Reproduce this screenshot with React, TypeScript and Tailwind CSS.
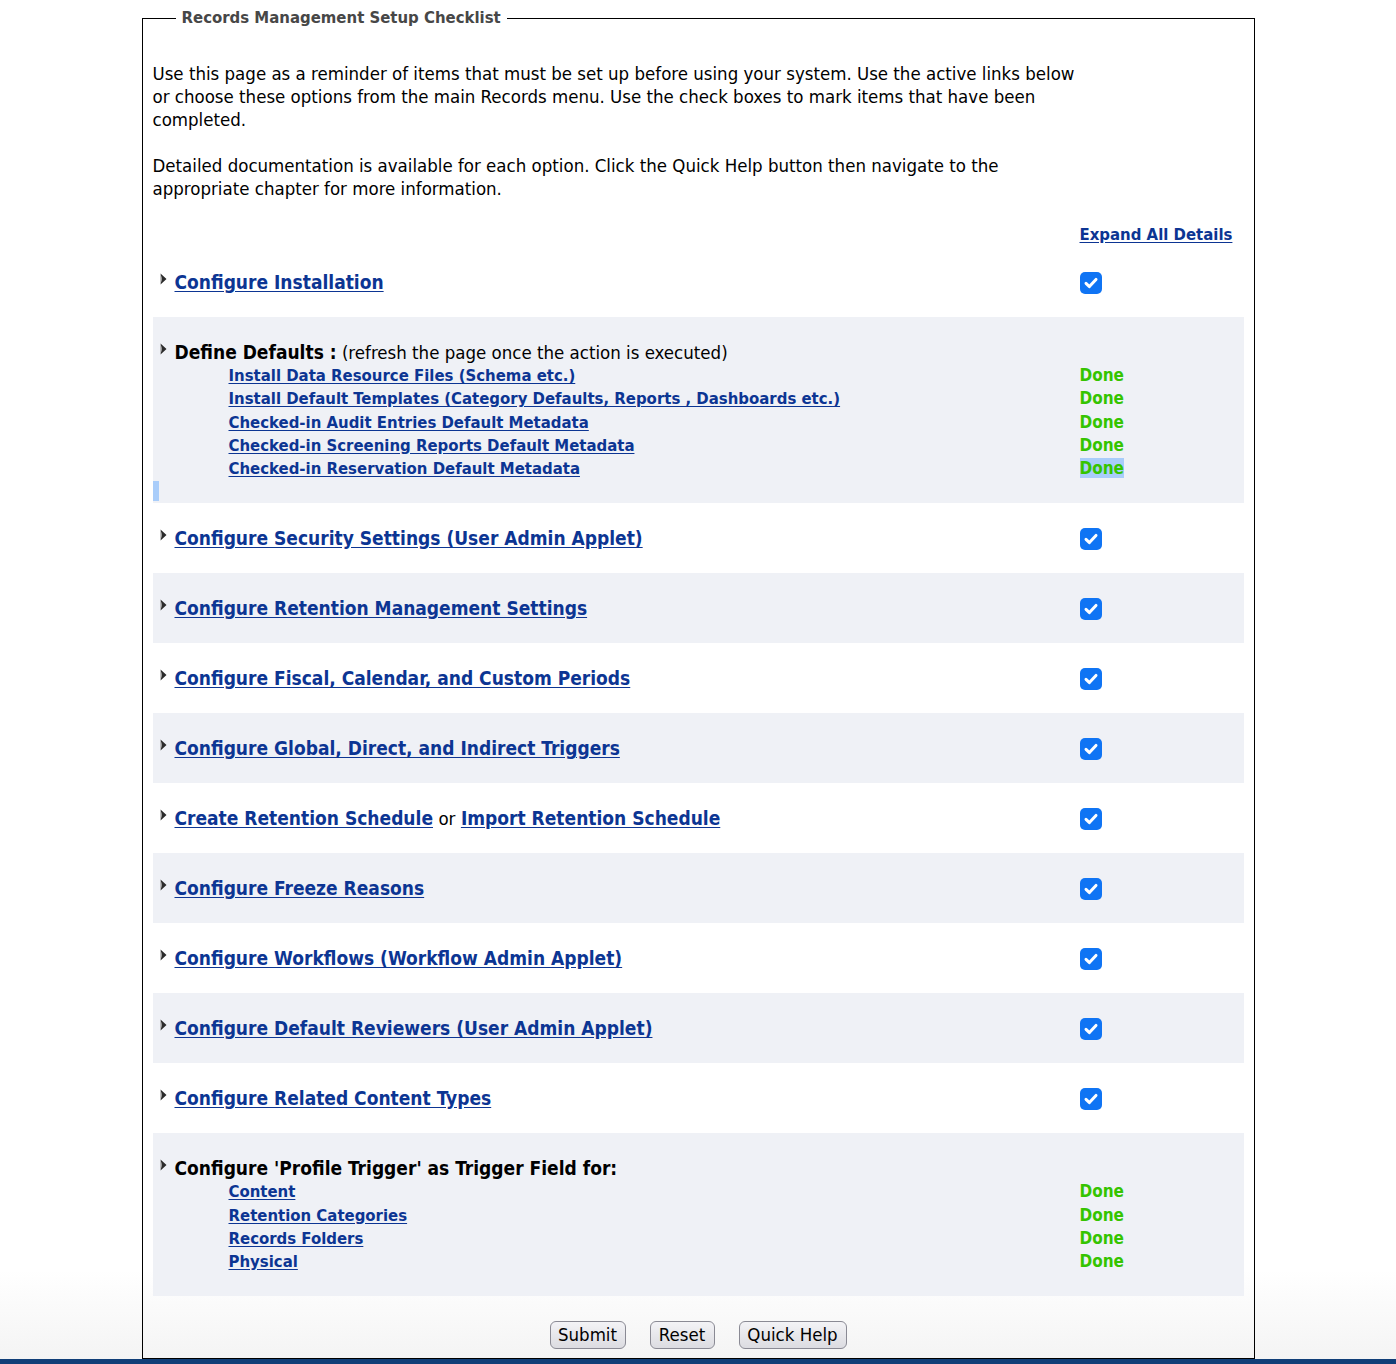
import React from "react";

function Arrow() {
  return (
    <svg width="7" height="12" viewBox="0 0 7 12" className="mt-[2px] ml-[7px] shrink-0">
      <path d="M0.5 0.5 L6.5 6 L0.5 11.5 L1.8 6 Z" fill="#2b2b2b" />
      <path d="M0.5 0.5 L1.8 6 L0.5 11.5 Z" fill="#8a8a8a" />
    </svg>
  );
}

function Check() {
  return (
    <div className="h-[23px] flex items-center">
      <div className="w-[22px] h-[22px] rounded-[5px] bg-[#0f74f4] flex items-center justify-center">
        <svg width="16" height="16" viewBox="0 0 16 16">
          <path d="M3 8.4 L6.4 11.6 L13 4.4" fill="none" stroke="#ffffff" strokeWidth="3" strokeLinecap="round" strokeLinejoin="round" />
        </svg>
      </div>
    </div>
  );
}

function L({ children }: { children: React.ReactNode }) {
  return (
    <a href="#" className="font-bold text-[#0c3593] underline underline-offset-[2px]">
      {children}
    </a>
  );
}

function S({ children }: { children: React.ReactNode }) {
  return (
    <div className="pl-[54px] text-[16.6px] leading-[23.25px]">
      <a href="#" className="font-bold text-[#0c3593] underline underline-offset-[2px]">
        {children}
      </a>
    </div>
  );
}

function Done({ sel }: { sel?: boolean }) {
  return (
    <div className="text-[17px] leading-[23.25px]">
      <span className={sel ? "font-bold text-[#35c400] bg-[#a9cdfa]" : "font-bold text-[#35c400]"}>Done</span>
    </div>
  );
}

function Row({
  gray,
  children,
  right,
  tail,
}: {
  gray?: boolean;
  children: React.ReactNode;
  right: React.ReactNode;
  tail?: React.ReactNode;
}) {
  return (
    <div className={gray ? "bg-[#eff1f6] pt-[24px]" : "pt-[24px]"}>
      <div className="grid grid-cols-[927px_1fr]">
        <div className="flex items-start">
          <Arrow />
          <div className="ml-[8px] text-[19px] leading-[23px]">{children}</div>
        </div>
        <div className="leading-[23px]">{right}</div>
      </div>
      {tail ? tail : <div className="h-[23px]" />}
    </div>
  );
}

function CheckRow({ gray, children }: { gray?: boolean; children: React.ReactNode }) {
  return (
    <Row gray={gray} right={<Check />}>
      <div className="h-[23px]">{children}</div>
    </Row>
  );
}

export default function App() {
  return (
    <div className="w-[1396px] h-[1364px] flex flex-col bg-[linear-gradient(to_bottom,#ffffff_1270px,#f4f4f4_1359px)] [font-family:'DejaVu_Sans_Condensed','DejaVu_Sans',sans-serif] [font-stretch:condensed] text-black">
      <div className="pt-[8px] flex-1">
        <fieldset className="w-[1113px] mx-auto border border-black px-[10px] pb-[8px] h-[1351px]">
          <legend className="ml-[23px] px-[6px] text-[16.6px] leading-[20px] font-bold text-[#474747]">
            Records Management Setup Checklist
          </legend>
          <div className="pt-[34px]">
            <p className="text-[18.5px] leading-[23px]">
              Use this page as a reminder of items that must be set up before using your system. Use the active links below
              <br />
              or choose these options from the main Records menu. Use the check boxes to mark items that have been
              <br />
              completed.
            </p>
            <p className="mt-[23px] text-[18.5px] leading-[23px]">
              Detailed documentation is available for each option. Click the Quick Help button then navigate to the
              <br />
              appropriate chapter for more information.
            </p>
            <div className="mt-[23px] h-[24px] grid grid-cols-[927px_1fr] text-[16.6px] leading-[23px]">
              <div />
              <div>
                <a href="#" className="font-bold text-[#0c3593] underline underline-offset-[2px]">
                  Expand All Details
                </a>
              </div>
            </div>

            <CheckRow>
              <L>Configure Installation</L>
            </CheckRow>

            <Row
              gray
              right={
                <div>
                  <div className="h-[23px]" />
                  <Done />
                  <Done />
                  <Done />
                  <Done />
                  <Done sel />
                </div>
              }
              tail={
                <div className="h-[23px] pt-[1px]">
                  <div className="w-[6px] h-[20px] bg-[#a9cdfa]" />
                </div>
              }
            >
              <div className="h-[23px] text-[18.5px]">
                <span className="font-bold text-[19px]">Define Defaults :</span> (refresh the page once the action is executed)
              </div>
              <div>
                <S>Install Data Resource Files (Schema etc.)</S>
                <S>Install Default Templates (Category Defaults, Reports , Dashboards etc.)</S>
                <S>Checked-in Audit Entries Default Metadata</S>
                <S>Checked-in Screening Reports Default Metadata</S>
                <S>Checked-in Reservation Default Metadata</S>
              </div>
            </Row>

            <CheckRow>
              <L>Configure Security Settings (User Admin Applet)</L>
            </CheckRow>
            <CheckRow gray>
              <L>Configure Retention Management Settings</L>
            </CheckRow>
            <CheckRow>
              <L>Configure Fiscal, Calendar, and Custom Periods</L>
            </CheckRow>
            <CheckRow gray>
              <L>Configure Global, Direct, and Indirect Triggers</L>
            </CheckRow>
            <CheckRow>
              <L>Create Retention Schedule</L> <span className="text-[18.5px]">or</span> <L>Import Retention Schedule</L>
            </CheckRow>
            <CheckRow gray>
              <L>Configure Freeze Reasons</L>
            </CheckRow>
            <CheckRow>
              <L>Configure Workflows (Workflow Admin Applet)</L>
            </CheckRow>
            <CheckRow gray>
              <L>Configure Default Reviewers (User Admin Applet)</L>
            </CheckRow>
            <CheckRow>
              <L>Configure Related Content Types</L>
            </CheckRow>

            <Row
              gray
              right={
                <div>
                  <div className="h-[23px]" />
                  <Done />
                  <Done />
                  <Done />
                  <Done />
                </div>
              }
            >
              <div className="h-[23px] font-bold">Configure 'Profile Trigger' as Trigger Field for:</div>
              <div>
                <S>Content</S>
                <S>Retention Categories</S>
                <S>Records Folders</S>
                <S>Physical</S>
              </div>
            </Row>

            <div className="mt-[25px] flex justify-center gap-[24px]">
              <button className="w-[76px] h-[28px] rounded-[6px] border border-[#8a8a94] bg-[linear-gradient(to_bottom,#f3f3f6,#dcdce1)] text-[18.5px] leading-none text-black">
                Submit
              </button>
              <button className="w-[65px] h-[28px] rounded-[6px] border border-[#8a8a94] bg-[linear-gradient(to_bottom,#f3f3f6,#dcdce1)] text-[18.5px] leading-none text-black">
                Reset
              </button>
              <button className="w-[108px] h-[28px] rounded-[6px] border border-[#8a8a94] bg-[linear-gradient(to_bottom,#f3f3f6,#dcdce1)] text-[18.5px] leading-none text-black">
                Quick Help
              </button>
            </div>
          </div>
        </fieldset>
      </div>
      <div className="h-[5px] bg-[#113f78]" />
    </div>
  );
}
